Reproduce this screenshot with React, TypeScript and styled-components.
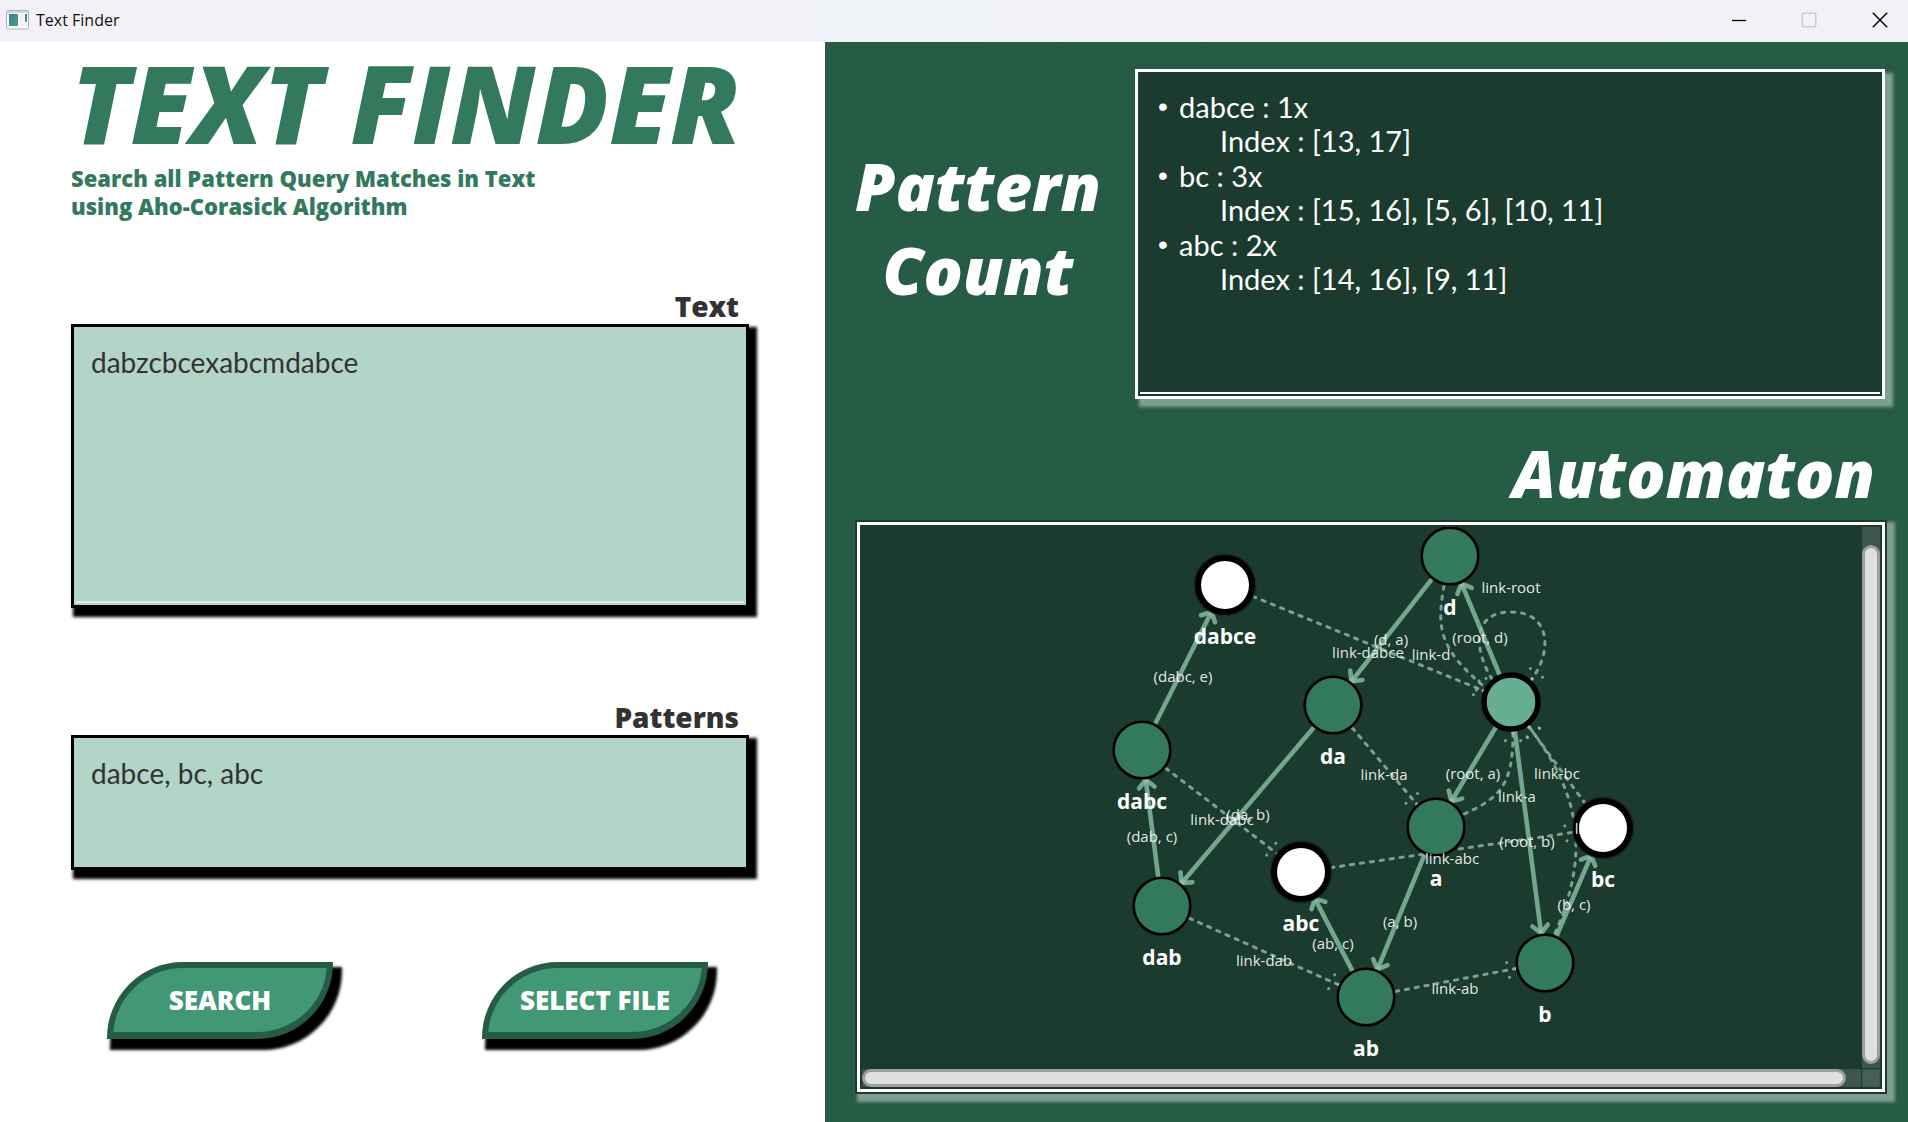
import React, { useState } from "react";
import styled, { createGlobalStyle } from "styled-components";

const color = {
  leaf: "#33795d",
  forest: "#265b45",
  night: "#1b3b2e",
  mint: "#b2d5c8",
  button: "#429876",
  root: "#67ad91",
  edge: "#8bc0a8",
  link: "#9cc4b3",
  ink: "#333333",
  shade: "#7f9f92",
};

const display = `"Open Sans", "Noto Sans", sans-serif`;
const body = `Lato, "Open Sans", sans-serif`;
const system = `"Open Sans", "Noto Sans", sans-serif`;

const GlobalStyle = createGlobalStyle`
  *, *::before, *::after { box-sizing: border-box; }
  body { margin: 0; background: #ffffff; font-family: ${body}; }
  h1, h2, p, ul { margin: 0; padding: 0; }
`;

const Window = styled.div`
  display: flex;
  flex-direction: column;
  min-height: 100vh;
`;

const TitleBar = styled.header`
  display: flex;
  align-items: center;
  gap: 7px;
  height: 42px;
  padding: 0 0 2px 6px;
  background: linear-gradient(90deg, #f3f1f7, #f2f1f7 30%, #f0f3f8 45%, #f0f3f8 50%, #f3f1f7 65%, #f2f1f7);
  font-family: ${system};
  font-size: 16px;
  color: #111111;
`;

const WindowButtons = styled.div`
  display: flex;
  margin-left: auto;
`;

const WindowButton = styled.button`
  display: grid;
  place-items: center;
  width: 70px;
  height: 38px;
  padding: 0;
  border: 0;
  background: none;
  color: #000000;
  &:disabled { color: #c5c4ca; }
  &:last-child { width: 56px; margin-left: 8px; }
`;

const Columns = styled.main`
  flex: 1;
  display: grid;
  grid-template-columns: 825fr 1083fr;
`;

const SearchPane = styled.section`
  display: flex;
  flex-direction: column;
  padding: 4px 76px 0 71px;
`;

const Heading = styled.h1`
  height: 118px;
  font-family: ${display};
  font-size: 108px;
  line-height: 114px;
  font-weight: 800;
  font-style: italic;
  white-space: nowrap;
  color: ${color.leaf};
`;

const Subtitle = styled.p`
  margin-bottom: 60px;
  font-family: ${display};
  font-size: 22px;
  line-height: 28px;
  font-weight: 800;
  color: ${color.leaf};
`;

const Field = styled.div<{ $gap: number }>`
  display: flex;
  flex-direction: column;
  margin-bottom: ${(p) => p.$gap}px;
`;

const FieldLabel = styled.label`
  padding: 8px 10px 0 0;
  text-align: right;
  font-family: ${display};
  font-size: 28px;
  line-height: 36px;
  font-weight: 800;
  color: ${color.ink};
`;

const InputFrame = styled.div<{ $line?: boolean }>`
  display: flex;
  flex-direction: column;
  border: 3px solid #000000;
  background: ${color.mint};
  box-shadow: 5px 6px 3px 3px #000000;
  &::after {
    content: "";
    display: ${(p) => (p.$line ? "block" : "none")};
    height: 2px;
    margin: 0 2px 2px;
    background: #dfece7;
  }
`;

const TextBox = styled.textarea<{ $height: number }>`
  display: block;
  width: 100%;
  height: ${(p) => p.$height}px;
  padding: 18px 17px;
  border: 0;
  outline: 0;
  resize: none;
  background: none;
  font-family: ${body};
  font-size: 28px;
  line-height: 34px;
  color: ${color.ink};
`;

const Actions = styled.div`
  display: flex;
  gap: 149px;
  padding-left: 36px;
`;

const LeafButton = styled.button`
  width: 226px;
  height: 77px;
  padding: 0;
  border: 6px solid ${color.forest};
  border-bottom-width: 7px;
  border-radius: 76px 0;
  background: ${color.button};
  box-shadow: 6px 8px 3px 3px #000000;
  font-family: ${display};
  font-size: 26px;
  font-weight: 800;
  white-space: nowrap;
  color: #ffffff;
`;

const ResultPane = styled.section`
  display: flex;
  flex-direction: column;
  padding: 27px 21px 28px 30px;
  background: ${color.forest};
  color: #ffffff;
`;

const CountRow = styled.div`
  display: flex;
  gap: 34px;
  padding-right: 2px;
`;

const CountTitle = styled.h2`
  width: 246px;
  padding-top: 75px;
  text-align: center;
  font-family: ${display};
  font-size: 65px;
  line-height: 84px;
  font-weight: 800;
  font-style: italic;
`;

const CountBox = styled.div`
  flex: 1;
  display: flex;
  flex-direction: column;
  justify-content: space-between;
  height: 330px;
  border: 3px solid #ffffff;
  background: ${color.night};
  box-shadow: 6px 6px 3px 2px ${color.shade};
  &::after {
    content: "";
    height: 2px;
    margin: 0 2px 2px;
    background: #ffffff;
  }
`;

const MatchList = styled.ul`
  display: flex;
  flex-direction: column;
  gap: 1px;
  padding: 18px 20px;
  list-style: none;
  font-size: 29px;
  line-height: 34px;
`;

const Match = styled.li`
  display: grid;
  grid-template-columns: 21px 1fr;
  grid-auto-rows: 34px;
`;

const Bullet = styled.span`
  font-family: "Liberation Sans", sans-serif;
  font-size: 28px;
`;

const MatchIndex = styled.span`
  grid-column: 2;
  padding-left: 41px;
`;

const AutomatonTitle = styled.h2`
  padding: 34px 12px 6px 0;
  text-align: right;
  font-family: ${display};
  font-size: 65px;
  line-height: 81px;
  font-weight: 800;
  font-style: italic;
`;

const Frame = styled.div`
  flex: 1;
  display: flex;
  padding: 2px;
  background: ${color.night};
  box-shadow: 5px 5px 3px 3px ${color.shade};
`;

const Scroller = styled.div`
  flex: 1;
  display: grid;
  grid-template: 1fr 18px / 1fr 18px;
  gap: 1px;
  min-width: 0;
  padding: 2px;
  border: 3px solid #ffffff;
`;

const Canvas = styled.div`
  min-width: 0;
  overflow: hidden;
`;

const Graph = styled.svg`
  display: block;
  overflow: visible;
`;

const Track = styled.div<{ $vertical?: boolean }>`
  display: flex;
  background: #3c564c;
  padding: ${(p) => (p.$vertical ? "18px 0 4px" : "0 15px 0 0")};
`;

const Thumb = styled.div`
  flex: 1;
  border: 3px solid #9e9e9e;
  border-radius: 9px;
  background: #e0e0e0;
`;

const Corner = styled.div`
  border: 1px solid #3c564c;
  background: #485f56;
`;

const NodeName = styled.text`
  font-family: ${system};
  font-size: 21px;
  font-weight: 700;
  text-anchor: middle;
  fill: #ffffff;
`;

const EdgeName = styled.text`
  font-family: ${system};
  font-size: 15px;
  text-anchor: middle;
  fill: #ffffff;
  fill-opacity: 0.9;
`;

type Point = [number, number];

const nodes: Record<string, Point> = {
  root: [649, 175],
  d: [588, 29],
  da: [471, 178],
  dab: [300, 379],
  dabc: [280, 223],
  dabce: [363, 58],
  a: [574, 300],
  ab: [504, 470],
  abc: [439, 345],
  b: [683, 436],
  bc: [741, 301],
};

const accepting = ["dabce", "abc", "bc"];

type Edge = { from: string; to: string; name: string; at: Point; curve?: Point[] };

const transitions: Edge[] = [
  { from: "root", to: "d", name: "(root, d)", at: [618, 116] },
  { from: "root", to: "a", name: "(root, a)", at: [611, 252] },
  { from: "root", to: "b", name: "(root, b)", at: [665, 320] },
  { from: "d", to: "da", name: "(d, a)", at: [529, 118] },
  { from: "da", to: "dab", name: "(da, b)", at: [386, 293] },
  { from: "dab", to: "dabc", name: "(dab, c)", at: [290, 315] },
  { from: "dabc", to: "dabce", name: "(dabc, e)", at: [321, 155] },
  { from: "a", to: "ab", name: "(a, b)", at: [538, 400] },
  { from: "ab", to: "abc", name: "(ab, c)", at: [471, 422] },
  { from: "b", to: "bc", name: "(b, c)", at: [712, 383] },
];

const failureLinks: Edge[] = [
  {
    from: "root", to: "root", name: "link-root", at: [649, 66],
    curve: [[630, 152], [612, 123], [609, 85], [649, 85], [688, 85], [691, 123], [670, 152]],
  },
  { from: "d", to: "root", name: "link-d", at: [569, 133], curve: [[582, 59], [574, 103], [578, 123], [625, 162]] },
  { from: "a", to: "root", name: "link-a", at: [655, 275], curve: [[602, 287], [638, 271], [651, 258], [651, 206]] },
  { from: "b", to: "root", name: "link-b", at: [732, 307], curve: [[693, 406], [730, 323], [716, 264], [667, 200]] },
  { from: "bc", to: "root", name: "link-bc", at: [695, 252] },
  { from: "da", to: "a", name: "link-da", at: [522, 253] },
  { from: "dab", to: "ab", name: "link-dab", at: [402, 439] },
  { from: "dabc", to: "abc", name: "link-dabc", at: [360, 298] },
  { from: "dabce", to: "root", name: "link-dabce", at: [506, 131] },
  { from: "ab", to: "b", name: "link-ab", at: [593, 467] },
  { from: "abc", to: "bc", name: "link-abc", at: [590, 337] },
];

const REACH = 30;
const ARM = 11;

function pointsOf(edge: Edge): Point[] {
  if (edge.curve) return edge.curve;
  const [x1, y1] = nodes[edge.from];
  const [x2, y2] = nodes[edge.to];
  const length = Math.hypot(x2 - x1, y2 - y1);
  const dx = ((x2 - x1) / length) * REACH;
  const dy = ((y2 - y1) / length) * REACH;
  return [[x1 + dx, y1 + dy], [x2 - dx, y2 - dy]];
}

function Arrow({ edge, dashed }: { edge: Edge; dashed?: boolean }) {
  const points = pointsOf(edge);
  const [start, ...rest] = points;
  const tip = points[points.length - 1];
  const before = points[points.length - 2];
  const back = Math.atan2(before[1] - tip[1], before[0] - tip[0]);
  const arm = (turn: number) =>
    `M${tip.join(" ")}L${tip[0] + ARM * Math.cos(back + turn)} ${tip[1] + ARM * Math.sin(back + turn)}`;
  const line = `M${start.join(" ")}${rest.length > 1 ? "C" : "L"}${rest.map((p) => p.join(" ")).join(" ")}`;
  return (
    <g
      fill="none"
      stroke={dashed ? color.link : color.edge}
      strokeOpacity={dashed ? 0.74 : 0.8}
      strokeWidth={dashed ? 3 : 4.6}
      strokeLinecap="round"
      strokeDasharray={dashed ? "3.2 6.8" : undefined}
    >
      <path d={line} />
      <path d={arm(Math.PI / 4)} strokeDasharray={dashed ? "0.1 10.5" : undefined} />
      <path d={arm(-Math.PI / 4)} strokeDasharray={dashed ? "0.1 10.5" : undefined} />
    </g>
  );
}

function State({ name }: { name: string }) {
  const [cx, cy] = nodes[name];
  if (accepting.includes(name)) {
    return (
      <g>
        <circle cx={cx} cy={cy} r={31.5} fill="#000000" fillOpacity={0.45} />
        <circle cx={cx} cy={cy} r={30.5} fill="#000000" />
        <circle cx={cx} cy={cy} r={30.5} fill="none" stroke="#4a5852" strokeWidth={0.4} />
        <circle cx={cx} cy={cy} r={24} fill="#ffffff" />
      </g>
    );
  }
  const isRoot = name === "root";
  return (
    <circle
      cx={cx}
      cy={cy}
      r={isRoot ? 27 : 28.3}
      fill={isRoot ? color.root : color.leaf}
      stroke="#000000"
      strokeWidth={isRoot ? 5.4 : 2.6}
    />
  );
}

function Automaton() {
  return (
    <Graph width="999" height="541" viewBox="0 0 999 541" role="img" aria-label="Automaton">
      {failureLinks.map((e) => <Arrow key={e.name} edge={e} dashed />)}
      {transitions.map((e) => <Arrow key={e.name} edge={e} />)}
      {Object.keys(nodes).map((n) => <State key={n} name={n} />)}
      {Object.keys(nodes).filter((n) => n !== "root").map((n) => (
        <NodeName key={n} x={nodes[n][0]} y={nodes[n][1] + 59}>{n}</NodeName>
      ))}
      {[...failureLinks, ...transitions].map((e) => (
        <EdgeName key={e.name} x={e.at[0]} y={e.at[1]}>{e.name}</EdgeName>
      ))}
    </Graph>
  );
}

function AppIcon() {
  return (
    <svg width="23" height="20" viewBox="0 0 23 20" aria-hidden="true">
      <defs>
        <linearGradient id="pane" x1="0" y1="0" x2="1" y2="1">
          <stop offset="0" stopColor="#3f78a8" />
          <stop offset="1" stopColor="#4da866" />
        </linearGradient>
      </defs>
      <rect x="0.5" y="0.5" width="22" height="18.5" rx="1.5" fill="#ffffff" stroke="#a9b4bc" />
      <rect x="1" y="1" width="21" height="2" fill="#cfd8de" />
      <rect x="3" y="4" width="9" height="12" fill="url(#pane)" />
      <rect x="13.5" y="4" width="4" height="8" fill="#eef0f0" />
      <rect x="13.5" y="13" width="7" height="3" fill="#eef0f0" />
      <rect x="19" y="4" width="2" height="8" fill="url(#pane)" />
    </svg>
  );
}

const matches = [
  { pattern: "dabce", count: 1, index: "[13, 17]" },
  { pattern: "bc", count: 3, index: "[15, 16], [5, 6], [10, 11]" },
  { pattern: "abc", count: 2, index: "[14, 16], [9, 11]" },
];

export default function App() {
  const [text, setText] = useState("dabzcbcexabcmdabce");
  const [patterns, setPatterns] = useState("dabce, bc, abc");
  return (
    <Window>
      <GlobalStyle />
      <TitleBar>
        <AppIcon />
        <span>Text Finder</span>
        <WindowButtons>
          <WindowButton aria-label="Minimize">
            <svg width="16" height="16" viewBox="0 0 16 16"><path d="M1 8.5h14" stroke="currentColor" strokeWidth="1.3" /></svg>
          </WindowButton>
          <WindowButton aria-label="Maximize" disabled>
            <svg width="16" height="16" viewBox="0 0 16 16"><rect x="1.2" y="1.2" width="13.6" height="13.6" rx="1.5" fill="none" stroke="currentColor" strokeWidth="1.3" /></svg>
          </WindowButton>
          <WindowButton aria-label="Close">
            <svg width="16" height="16" viewBox="0 0 16 16"><path d="M0.8 0.8L15.2 15.2M15.2 0.8L0.8 15.2" stroke="currentColor" strokeWidth="1.4" /></svg>
          </WindowButton>
        </WindowButtons>
      </TitleBar>
      <Columns>
        <SearchPane>
          <Heading>TEXT FINDER</Heading>
          <Subtitle>
            Search all Pattern Query Matches in Text
            <br />
            using Aho-Corasick Algorithm
          </Subtitle>
          <Field $gap={83}>
            <FieldLabel htmlFor="text">Text</FieldLabel>
            <InputFrame $line>
              <TextBox id="text" $height={274} spellCheck={false} value={text} onChange={(e) => setText(e.target.value)} />
            </InputFrame>
          </Field>
          <Field $gap={92}>
            <FieldLabel htmlFor="patterns">Patterns</FieldLabel>
            <InputFrame>
              <TextBox id="patterns" $height={129} spellCheck={false} value={patterns} onChange={(e) => setPatterns(e.target.value)} />
            </InputFrame>
          </Field>
          <Actions>
            <LeafButton type="button">SEARCH</LeafButton>
            <LeafButton type="button">SELECT FILE</LeafButton>
          </Actions>
        </SearchPane>
        <ResultPane>
          <CountRow>
            <CountTitle>Pattern Count</CountTitle>
            <CountBox>
              <MatchList>
                {matches.map((m) => (
                  <Match key={m.pattern}>
                    <Bullet>•</Bullet>
                    <span>{m.pattern} : {m.count}x</span>
                    <MatchIndex>Index : {m.index}</MatchIndex>
                  </Match>
                ))}
              </MatchList>
            </CountBox>
          </CountRow>
          <AutomatonTitle>Automaton</AutomatonTitle>
          <Frame>
            <Scroller>
              <Canvas><Automaton /></Canvas>
              <Track $vertical><Thumb /></Track>
              <Track><Thumb /></Track>
              <Corner />
            </Scroller>
          </Frame>
        </ResultPane>
      </Columns>
    </Window>
  );
}
